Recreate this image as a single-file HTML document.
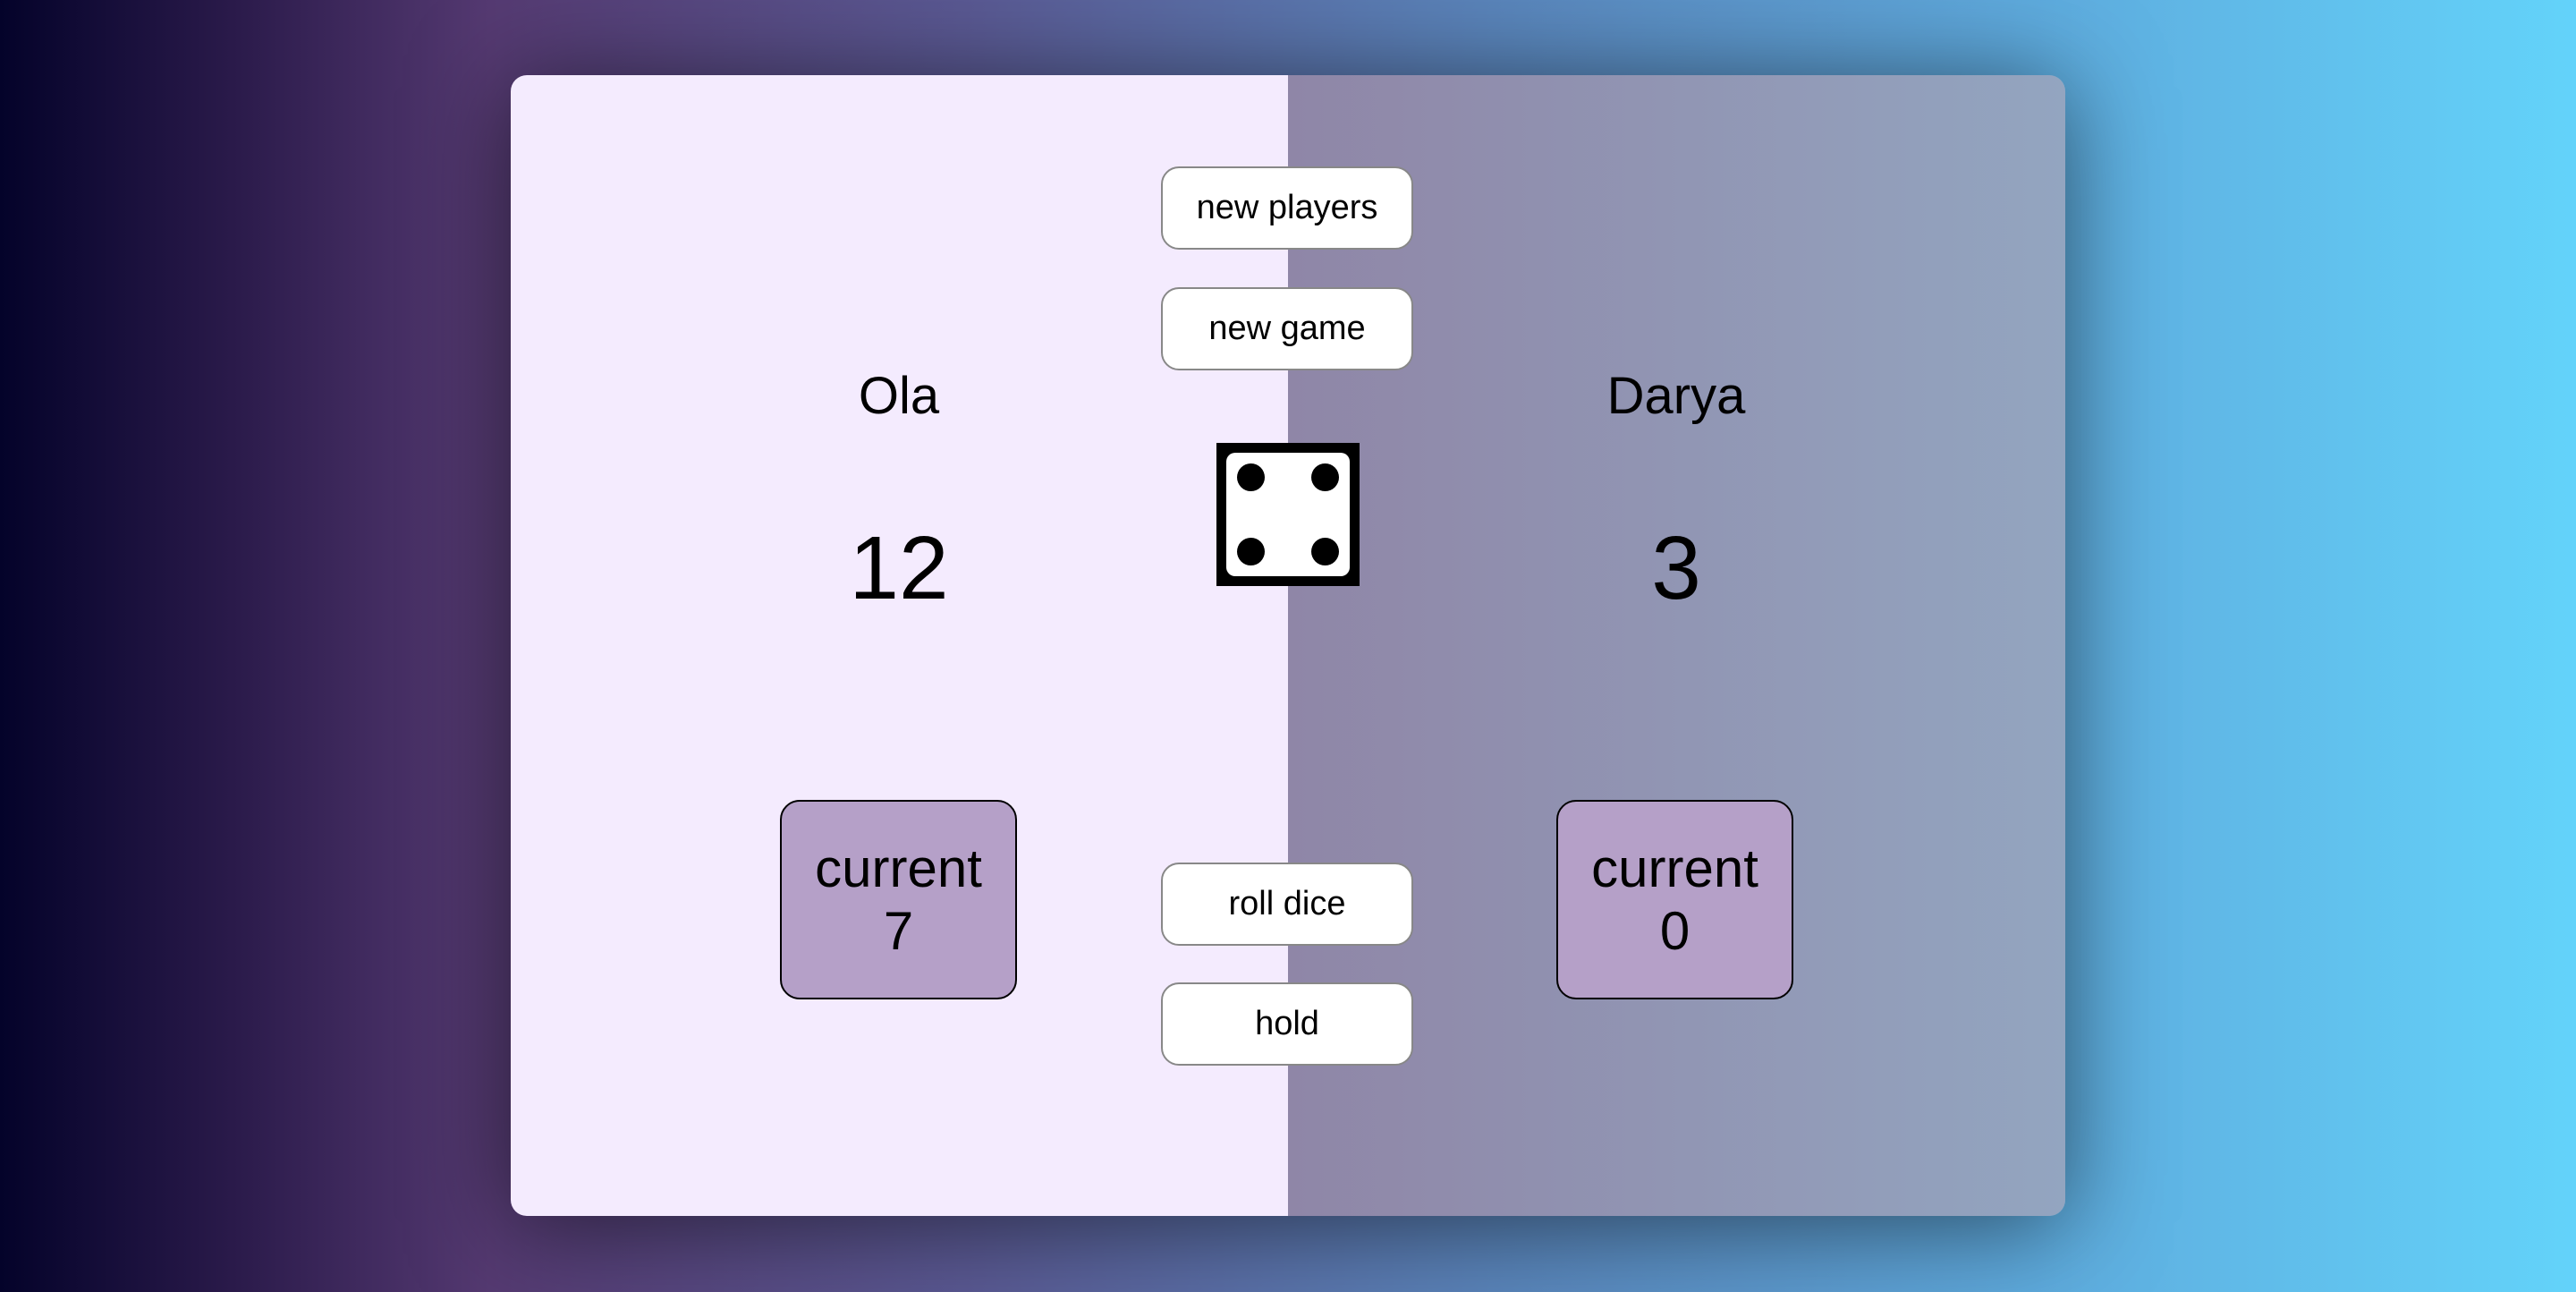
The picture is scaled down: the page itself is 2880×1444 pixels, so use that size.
<!DOCTYPE html>
<html><head><meta charset="utf-8"><style>
html,body{margin:0;padding:0;width:2880px;height:1444px;overflow:hidden}
body{background:linear-gradient(90deg,#04032a 0%,#2a1a4a 9%,#553a72 19%,#5a5a94 38%,#5a85bb 58%,#5ea9dc 78%,#63d3fa 100%);font-family:"Liberation Sans",sans-serif;position:relative}
.card{position:absolute;left:571px;top:84px;width:1738px;height:1275px;border-radius:18px;overflow:hidden;box-shadow:0 10px 110px rgba(0,0,0,.55)}
.l{position:absolute;left:0;top:0;width:869px;height:100%;background:#f4ebfe}
.r{position:absolute;left:869px;top:0;width:869px;height:100%;background:linear-gradient(90deg,#8f86a7,#93a5c0)}
.t{position:absolute;color:#000;text-align:center;white-space:nowrap;transform:translateX(-50%)}
.name{font-size:58px;top:410px;line-height:66px}
.score{font-size:100px;top:585px;line-height:100px}
.cur{position:absolute;width:265px;height:223px;border:2px solid #000;border-radius:22px;background:#b5a0c8;box-sizing:border-box;text-align:center;font-size:60px;line-height:70px;padding-top:40px}
.btn{position:absolute;left:1298px;width:282px;height:93px;background:#fff;border:2px solid #888;border-radius:20px;box-sizing:border-box;text-align:center;font-size:38px;line-height:88px;color:#000}
.dice{position:absolute;left:1360px;top:495px;width:160px;height:160px;background:#000}
.face{position:absolute;left:11px;top:11px;width:138px;height:138px;background:#fff;border-radius:10px}
.dot{position:absolute;width:31px;height:31px;border-radius:50%;background:#000}
</style></head><body>
<div class="card"><div class="l"></div><div class="r"></div></div>
<div class="t name" style="left:1005px">Ola</div>
<div class="t name" style="left:1874px">Darya</div>
<div class="t score" style="left:1005px">12</div>
<div class="t score" style="left:1874px">3</div>
<div class="cur" style="left:872px;top:894px">current<br>7</div>
<div class="cur" style="left:1740px;top:894px">current<br>0</div>
<div class="btn" style="top:186px">new players</div>
<div class="btn" style="top:321px">new game</div>
<div class="btn" style="top:964px">roll dice</div>
<div class="btn" style="top:1098px">hold</div>
<div class="dice"><div class="face">
<div class="dot" style="left:12px;top:12px"></div><div class="dot" style="left:95px;top:12px"></div>
<div class="dot" style="left:12px;top:95px"></div><div class="dot" style="left:95px;top:95px"></div>
</div></div>
</body></html>
